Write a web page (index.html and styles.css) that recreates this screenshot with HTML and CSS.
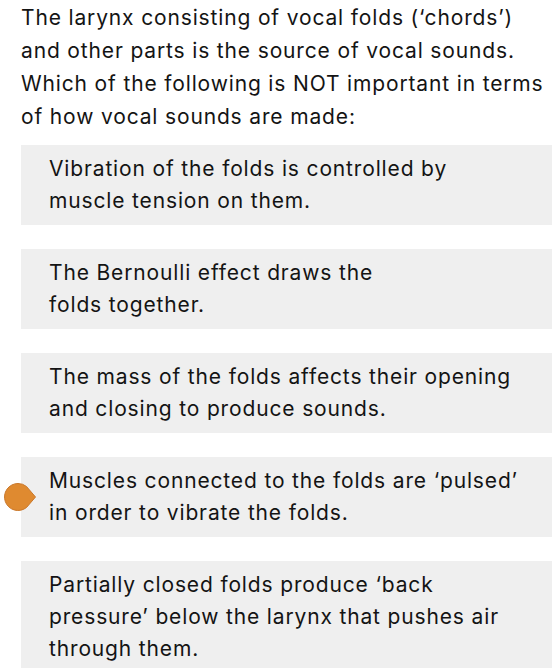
FILE: index.html
```html
<!DOCTYPE html>
<html>
<head>
<meta charset="utf-8">
<link rel="stylesheet" href="styles.css">
</head>
<body>
<div class="page">
  <p class="question">The larynx consisting of vocal folds (‘chords’)<br>and other parts is the source of vocal sounds.<br>Which of the following is NOT important in terms<br>of how vocal sounds are made:</p>
  <div class="options">
    <div class="option">Vibration of the folds is controlled by<br>muscle tension on them.</div>
    <div class="option">The Bernoulli effect draws the<br>folds together.</div>
    <div class="option">The mass of the folds affects their opening<br>and closing to produce sounds.</div>
    <div class="option selected">
      <svg class="marker" width="34" height="30" viewBox="0 0 34 30"><path d="M15 1.5 A13.5 13.5 0 1 0 23.5 25.5 L32.5 15 L23.5 4.5 A13.5 13.5 0 0 0 15 1.5 Z" fill="#df8a30" stroke="#c9772a" stroke-width="1"/></svg>
      Muscles connected to the folds are ‘pulsed’<br>in order to vibrate the folds.</div>
    <div class="option">Partially closed folds produce ‘back<br>pressure’ below the larynx that pushes air<br>through them.</div>
  </div>
</div>
</body>
</html>
```
FILE: styles.css
```css
html, body {
  margin: 0;
  padding: 0;
  background: #ffffff;
}
.page {
  width: 552px;
  height: 668px;
  overflow: hidden;
  padding-left: 21px;
  box-sizing: border-box;
  font-family: Inter, "Liberation Sans", Arial, sans-serif;
  color: #141414;
  font-size: 21px;
  letter-spacing: 0.85px;
  white-space: nowrap;
}
.question {
  margin: 1px 0 0 0;
  line-height: 33px;
}
.options {
  display: flex;
  flex-direction: column;
  gap: 24px;
  margin-top: 12px;
}
.option {
  position: relative;
  background: #efefef;
  padding: 8px 0 8px 28px;
  line-height: 32px;
  min-height: 64px;
}
.marker {
  position: absolute;
  left: -18px;
  top: 50%;
  margin-top: -15px;
}
```
